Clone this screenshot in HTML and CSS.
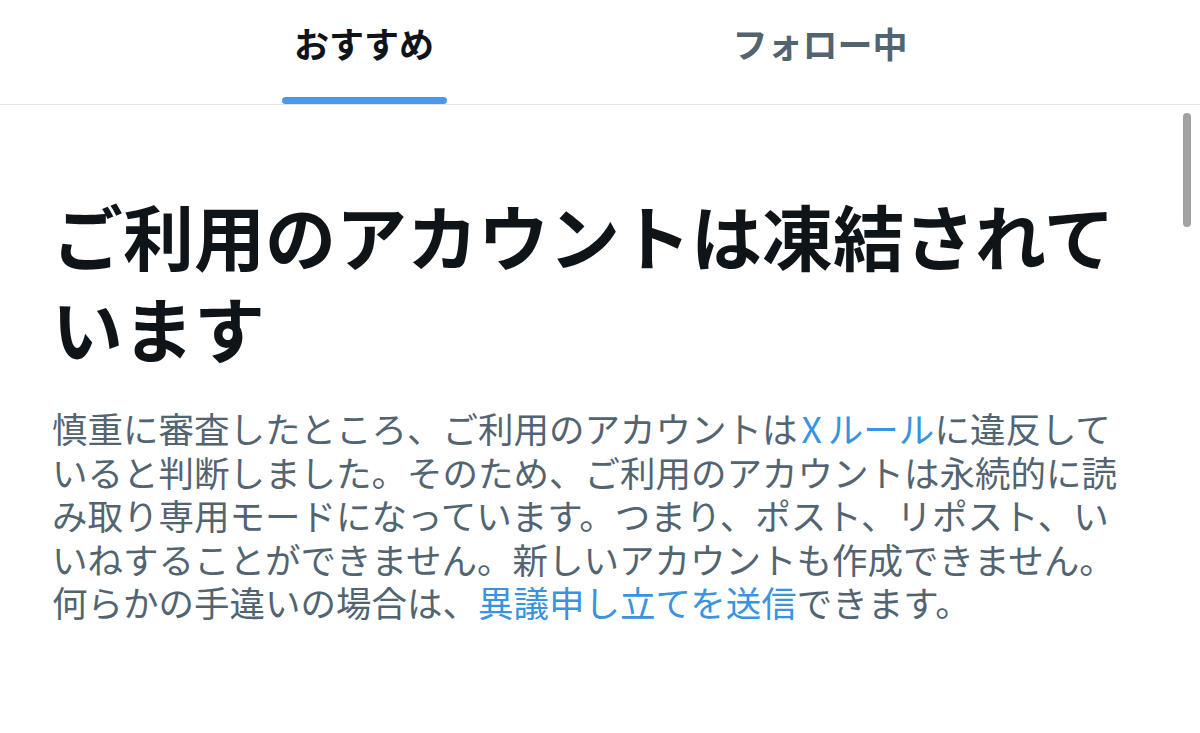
FILE: index.html
```html
<!DOCTYPE html>
<html lang="ja">
<head>
<meta charset="utf-8">
<title>凍結</title>
<link rel="stylesheet" href="styles.css">
</head>
<body>
<div class="page">
  <nav class="tabs">
    <div class="tab active"><span class="tab-label">おすすめ</span><span class="indicator"></span></div>
    <div class="tab"><span class="tab-label">フォロー中</span></div>
  </nav>
  <main class="content">
    <h1 class="title">ご利用のアカウントは凍結されています</h1>
    <p class="desc">慎重に審査したところ、ご利用のアカウントは<a class="link" href="#"><span class="x">X</span>ルール</a>に違反していると判断しました。そのため、ご利用のアカウントは永続的に読み取り専用モードになっています。つまり、ポスト、リポスト、いいねすることができません。新しいアカウントも作成できません。何らかの手違いの場合は、<a class="link" href="#">異議申し立てを送信</a>できます。</p>
  </main>
  <div class="scrollbar"></div>
</div>
</body>
</html>
```

FILE: styles.css
```css
html, body {
  margin: 0;
  padding: 0;
  background: #ffffff;
}
body {
  font-family: "Noto Sans CJK JP", "Noto Sans", sans-serif;
  width: 1200px;
  height: 733px;
  overflow: hidden;
}
.page {
  position: relative;
  width: 1200px;
  height: 733px;
}
.tabs {
  display: flex;
  height: 104px;
  border-bottom: 1px solid #e4e6e8;
  padding-left: 136px;
  padding-right: 152px;
}
.tab {
  flex: 1;
  position: relative;
  display: flex;
  justify-content: center;
  align-items: center;
  padding-bottom: 20px;
}
.tab-label {
  font-size: 35px;
  font-weight: 700;
  color: #536471;
  line-height: 1;
}
.tab.active .tab-label {
  color: #0f1419;
}
.indicator {
  position: absolute;
  bottom: 0;
  left: 50%;
  width: 165px;
  height: 7px;
  margin-left: -82px;
  border-radius: 4px;
  background: #4a99e9;
}
.content {
  padding: 83px 60px 0 52px;
}
.title {
  margin: 0;
  font-size: 71px;
  line-height: 92px;
  font-weight: 700;
  color: #0f1419;
}
.desc {
  margin: 34px 0 0 0;
  font-size: 35.5px;
  line-height: 43.5px;
  color: #536471;
}
.link {
  color: #3a93de;
  text-decoration: none;
}
.x {
  padding: 0 6px 0 4px;
}
.scrollbar {
  position: absolute;
  top: 113px;
  left: 1183px;
  width: 8px;
  height: 114px;
  border-radius: 4px;
  background: #a2a2a2;
}
```
